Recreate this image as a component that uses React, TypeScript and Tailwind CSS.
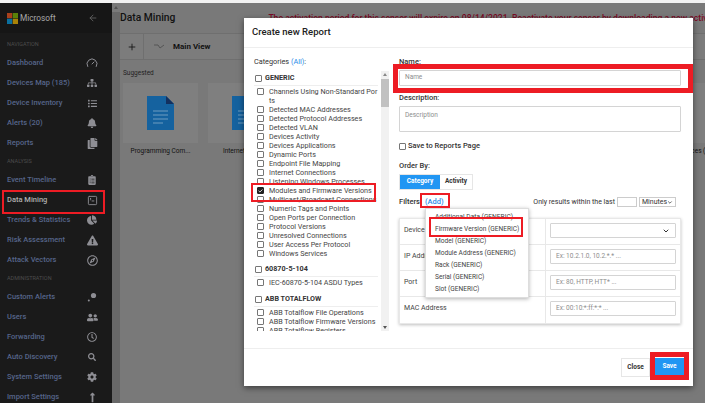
import React from 'react';
import {
  FaBell, FaChartPie, FaClipboardList, FaCog, FaExclamationTriangle, FaList, FaSitemap, FaUserFriends,
  FaLongArrowAltUp, FaRegCompass, FaSearch, FaRegClock, FaCopy,
} from 'react-icons/fa';
import { ArrowLeft, Check, ChevronDown, Gauge, Plus, SquareTerminal } from 'lucide-react';

const font = { fontFamily: 'Roboto, "Liberation Sans", sans-serif' };

const NavItem = ({ label, icon, active }: { label: string; icon: React.ReactNode; active?: boolean }) => (
  <div className={`h-5 pl-[7px] pr-[14px] flex items-center justify-between text-[7.5px] font-medium ${active ? 'text-[#b0b0b0]' : 'text-[#56658a]'}`}>
    <span>{label}</span>
    <span className="w-3 flex justify-center text-[#8e8e94]">{icon}</span>
  </div>
);

const NavHeading = ({ label }: { label: string }) => (
  <div className="h-[17px] pl-[7px] flex items-center text-[5.5px] text-[#4c4c4c]">{label}</div>
);

const Sidebar = () => (
  <div className="w-[112px] h-full bg-[#1a1a1a] flex-none">
    <div className="h-[30px] bg-[#161616] pl-[7px] pr-[14px] flex items-center justify-between">
      <div className="flex items-center gap-[2px]">
        <svg width="11" height="11" viewBox="0 0 22 22">
          <rect width="10.5" height="10.5" fill="#a8401c" />
          <rect x="11.5" width="10.5" height="10.5" fill="#5a8208" />
          <rect y="11.5" width="10.5" height="10.5" fill="#0a6f9f" />
          <rect x="11.5" y="11.5" width="10.5" height="10.5" fill="#a88208" />
        </svg>
        <span className="text-[8.3px] text-[#a8a8a8]">Microsoft</span>
      </div>
      <ArrowLeft size={10} className="text-[#666]" />
    </div>
    <div className="mt-[3px]">
      <NavHeading label="NAVIGATION" />
      <NavItem label="Dashboard" icon={<Gauge size={12} />} />
      <NavItem label="Devices Map (185)" icon={<FaSitemap size={10} />} />
      <NavItem label="Device Inventory" icon={<FaList size={9} />} />
      <NavItem label="Alerts (20)" icon={<FaBell size={10} />} />
      <NavItem label="Reports" icon={<FaCopy size={11} />} />
      <NavHeading label="ANALYSIS" />
      <NavItem label="Event Timeline" icon={<FaClipboardList size={10} />} />
      <NavItem label="Data Mining" active icon={<SquareTerminal size={11} />} />
      <NavItem label="Trends & Statistics" icon={<FaChartPie size={10} />} />
      <NavItem label="Risk Assessment" icon={<FaExclamationTriangle size={11} />} />
      <NavItem label="Attack Vectors" icon={<FaRegCompass size={11} />} />
      <NavHeading label="ADMINISTRATION" />
      <NavItem
        label="Custom Alerts"
        icon={
          <svg width="10" height="10" viewBox="0 0 10 10" fill="currentColor">
            <circle cx="6.5" cy="3.5" r="2.6" />
            <circle cx="1.8" cy="8.6" r="1" />
          </svg>
        }
      />
      <NavItem label="Users" icon={<FaUserFriends size={11} />} />
      <NavItem label="Forwarding" icon={<FaRegClock size={10} />} />
      <NavItem label="Auto Discovery" icon={<FaSearch size={8} />} />
      <NavItem label="System Settings" icon={<FaCog size={10} />} />
      <NavItem label="Import Settings" icon={<FaLongArrowAltUp size={11} />} />
    </div>
  </div>
);

const DocIcon = () => (
  <svg width="27" height="34" viewBox="0 0 27 34">
    <path d="M0 0H19L27 8V34H0Z" fill="#15629f" />
    <path d="M19 0L27 8H19Z" fill="#13305f" />
    <path d="M6 15H21M6 19H21M6 23H21M6 27H16" stroke="#6f9cc0" strokeWidth="1" />
  </svg>
);

const ReportCard = ({ label }: { label: string }) => (
  <div className="w-[75px] flex-none">
    <div className="h-[60px] bg-[#7f7f7f] flex items-center justify-center">
      <DocIcon />
    </div>
    <div className="mt-[4px] text-[6.5px] text-[#111] flex justify-center whitespace-nowrap">{label}</div>
  </div>
);

const suggested = [
  'Programming Com...',
  'Internet Activity',
  'CIP Commands',
  'Purdue Level',
  'Devices by Type',
  'Excluded CVEs',
  'Protocol Versions Devices (All)',
];

const Background = () => (
  <div className="flex-1 min-w-0 h-full bg-[#797979] overflow-hidden">
    <div className="h-[30px] flex items-center whitespace-nowrap">
      <span className="text-[10.3px] font-medium text-[#111]">Data Mining</span>
      <span className="ml-[93px] text-[8.6px] font-medium text-[#7a0a24]">
        The activation period for this sensor will expire on 08/14/2021. Reactivate your sensor by downloading a new activation file from Azure
      </span>
    </div>
    <div className="h-[27px] border-y border-[#6f6f6f] bg-[#7c7c7c] flex items-center text-[8px] font-bold text-[#111]">
      <div className="w-[24px] h-full border-r border-[#6f6f6f] flex items-center justify-center">
        <Plus size={10} />
      </div>
      <svg className="ml-[10px]" width="11" height="6" viewBox="0 0 11 6" fill="none" stroke="#555" strokeWidth="1">
        <path d="M0 1H4L6 4L10 1" />
      </svg>
      <span className="ml-[8px]">Main View</span>
    </div>
    <div className="px-[3px] mt-[9px]">
      <div className="text-[6.5px] leading-[9px] text-[#222]">Suggested</div>
      <div className="flex gap-[10px] mt-[5px]">
        {suggested.map((label) => (
          <ReportCard key={label} label={label} />
        ))}
      </div>
    </div>
  </div>
);

const Box = ({ checked }: { checked?: boolean }) => (
  <span className={`w-[7px] h-[7px] flex-none border rounded-[1px] flex items-center justify-center ${checked ? 'bg-[#222] border-[#222]' : 'bg-white border-[#767676]'}`}>
    {checked && <Check size={6} strokeWidth={4} className="text-white" />}
  </span>
);

const Item = ({ label, checked }: { label: React.ReactNode; checked?: boolean }) => (
  <div className="flex items-start pl-[3px] gap-[5px] leading-[9px] whitespace-nowrap">
    <span className="mt-[1px]">
      <Box checked={checked} />
    </span>
    <span>{label}</span>
  </div>
);

const Group = ({ label }: { label: string }) => (
  <div className="flex items-center gap-[3px] pl-[1px] h-[15px] border-b border-[#eee] font-bold text-[#333] mb-[1px]">
    <Box />
    <span>{label}</span>
  </div>
);

const CategoryList = () => (
  <div className="w-[145px] flex-none pl-[10px] pt-[9px]">
    <div className="h-[10px] text-[7.3px] leading-[10px] text-[#333]">
      Categories <span className="text-[#2b8ae8]">(All)</span>:
    </div>
    <div className="mt-[4px] h-[260px] flex overflow-hidden text-[7.2px] text-[#444]">
      <div className="flex-1 min-w-0 pr-[3px] overflow-hidden">
        <Group label="GENERIC" />
        <Item label={<>Channels Using Non-Standard Por<br />ts</>} />
        {[
          'Detected MAC Addresses',
          'Detected Protocol Addresses',
          'Detected VLAN',
          'Devices Activity',
          'Devices Applications',
          'Dynamic Ports',
          'Endpoint File Mapping',
          'Internet Connections',
          'Listening Windows Processes',
        ].map((label) => (
          <Item key={label} label={label} />
        ))}
        <Item label="Modules and Firmware Versions" checked />
        {[
          'Multicast/Broadcast Connections',
          'Numeric Tags and Points',
          'Open Ports per Connection',
          'Protocol Versions',
          'Unresolved Connections',
          'User Access Per Protocol',
          'Windows Services',
        ].map((label) => (
          <Item key={label} label={label} />
        ))}
        <div className="mt-[4px]">
          <Group label="60870-5-104" />
        </div>
        <Item label="IEC-60870-5-104 ASDU Types" />
        <div className="mt-[5px]">
          <Group label="ABB TOTALFLOW" />
        </div>
        <Item label="ABB Totalflow File Operations" />
        <Item label="ABB Totalflow Firmware Versions" />
        <Item label="ABB Totalflow Registers" />
      </div>
      <div className="w-[8px] flex-none bg-[#f1f1f1] flex flex-col items-center">
        <span className="mt-[2px] w-0 h-0 border-x-[2px] border-x-transparent border-b-[3px] border-b-[#888]" />
        <span className="mt-[3px] w-full h-[28px] bg-[#c1c1c1]" />
        <span className="mt-auto mb-[2px] w-0 h-0 border-x-[2px] border-x-transparent border-t-[3px] border-t-[#555]" />
      </div>
    </div>
  </div>
);

const inputClass =
  'w-full border border-[#d4d4d4] rounded-[1px] px-[5px] flex items-center text-[6.5px] text-[#8d8d8d] bg-white';

const FilterRow = ({ label, hint, last }: { label: string; hint?: string; last?: boolean }) => (
  <div className={`h-[26px] flex ${last ? '' : 'border-b border-[#e8e8e8]'}`}>
    <div className="w-[146px] flex-none border-r border-[#e8e8e8] pl-[4px] pt-[6px] text-[7px] text-[#444]">{label}</div>
    <div className="flex-1 px-[4px] pt-[4px]">
      <div className={`${inputClass} h-[15px] justify-between`}>
        {hint}
        {!hint && <ChevronDown size={8} strokeWidth={3} className="ml-auto text-[#333]" />}
      </div>
    </div>
  </div>
);

const ReportForm = () => (
  <div className="flex-1 min-w-0 pl-[10px] pr-[12px] pt-[9px] text-[7.5px] text-[#333]">
    <div className="font-medium leading-[10px]">Name:</div>
    <div className={`${inputClass} h-[16px] mt-[3px]`}>Name</div>
    <div className="font-medium leading-[10px] mt-[7px]">Description:</div>
    <div className={`${inputClass} h-[26px] mt-[3px] !items-start pt-[4px]`}>Description</div>
    <div className="flex items-center gap-[2px] mt-[9px] h-[10px] font-medium">
      <Box />
      <span>Save to Reports Page</span>
    </div>
    <div className="font-medium leading-[10px] mt-[10px]">Order By:</div>
    <div className="flex mt-[3px] h-[16px] w-[74px] border border-[#e6e6e6] text-[6.5px] font-bold">
      <div className="w-[40px] bg-[#2196f3] text-white flex items-center justify-center">Category</div>
      <div className="flex-1 flex items-center justify-center text-[#333]">Activity</div>
    </div>
    <div className="flex items-center h-[12px] mt-[6px]">
      <span className="font-medium">Filters</span>
      <span className="ml-[5px] text-[#2b8ae8] font-medium">(Add)</span>
      <span className="ml-auto text-[7px]">Only results within the last</span>
      <span className="w-[20px] h-[10px] ml-[2px] border border-[#ccc]" />
      <span className="w-[37px] h-[10px] ml-[2px] mr-[5px] border border-[#ccc] flex items-center justify-between px-[2px] text-[7px]">
        Minutes
        <ChevronDown size={7} strokeWidth={3} />
      </span>
    </div>
    <div className="relative mt-[10px] border border-[#e8e8e8] shadow-[0_1px_3px_rgba(0,0,0,0.25)]">
      <FilterRow label="Device Group" />
      <FilterRow label="IP Address" hint="Ex: 10.2.1.0, 10.2.*.* ..." />
      <FilterRow label="Port" hint="Ex: 80, HTTP, HTT* ..." />
      <FilterRow label="MAC Address" hint="Ex: 00:10:*:ff:*:* ..." last />
      <div className="absolute left-[25px] top-[-11px] w-[104px] h-[90px] bg-white border border-[#ddd] shadow-[0_1px_4px_rgba(0,0,0,0.3)] pl-[9px] pt-[2px] text-[6.6px] leading-[12px] text-[#444] whitespace-nowrap">
        <div>Additional Data (GENERIC)</div>
        <div>Firmware Version (GENERIC)</div>
        <div>Model (GENERIC)</div>
        <div>Module Address (GENERIC)</div>
        <div>Rack (GENERIC)</div>
        <div>Serial (GENERIC)</div>
        <div>Slot (GENERIC)</div>
      </div>
    </div>
  </div>
);

const Modal = () => (
  <div className="absolute left-[244px] top-[18px] w-[449px] h-[368px] bg-white shadow-[0_2px_6px_rgba(0,0,0,0.5)] flex flex-col">
    <div className="h-[30px] flex-none border-b border-[#eee] pl-[8px] flex items-center text-[9.5px] font-medium text-[#222]">
      Create new Report
    </div>
    <div className="flex-1 min-h-0 flex">
      <CategoryList />
      <ReportForm />
    </div>
    <div className="h-[38px] flex-none border-t border-[#eee] flex items-start justify-end pr-[9px] pt-[9px] gap-[5px] text-[6.5px] font-bold">
      <div className="w-[29px] h-[19px] border border-[#e6e6e6] flex items-center justify-center text-[#333]">Close</div>
      <div className="w-[29px] h-[18px] bg-[#2196f3] text-white flex items-center justify-center">Save</div>
    </div>
  </div>
);

const highlights = [
  'left-[2px] top-[190px] w-[103px] h-[24px] border-2',
  'left-[393px] top-[64px] w-[300px] h-[29px] border-[5px]',
  'left-[251px] top-[183px] w-[125px] h-[19px] border-2',
  'left-[420px] top-[193px] w-[30px] h-[15px] border-2',
  'left-[429px] top-[217px] w-[94px] h-[20px] border-2',
  'left-[650px] top-[352px] w-[39px] h-[28px] border-[5px]',
];

export default function App() {
  return (
    <div style={font} className="relative w-[705px] h-[403px] overflow-hidden bg-[#f2f2f2]">
      <div className="h-[3px]" />
      <div className="h-[400px] flex">
        <Sidebar />
        <div className="w-[8px] flex-none bg-[#7a7a7a] flex flex-col items-center">
          <span className="mt-[3px] w-0 h-0 border-x-[2px] border-x-transparent border-b-[3px] border-b-[#555]" />
          <div className="mt-[3px] w-full flex-1 bg-[#686868]" />
        </div>
        <Background />
      </div>
      <Modal />
      {highlights.map((cls) => (
        <div key={cls} className={`absolute border-[#ed1c24] ${cls}`} />
      ))}
    </div>
  );
}
